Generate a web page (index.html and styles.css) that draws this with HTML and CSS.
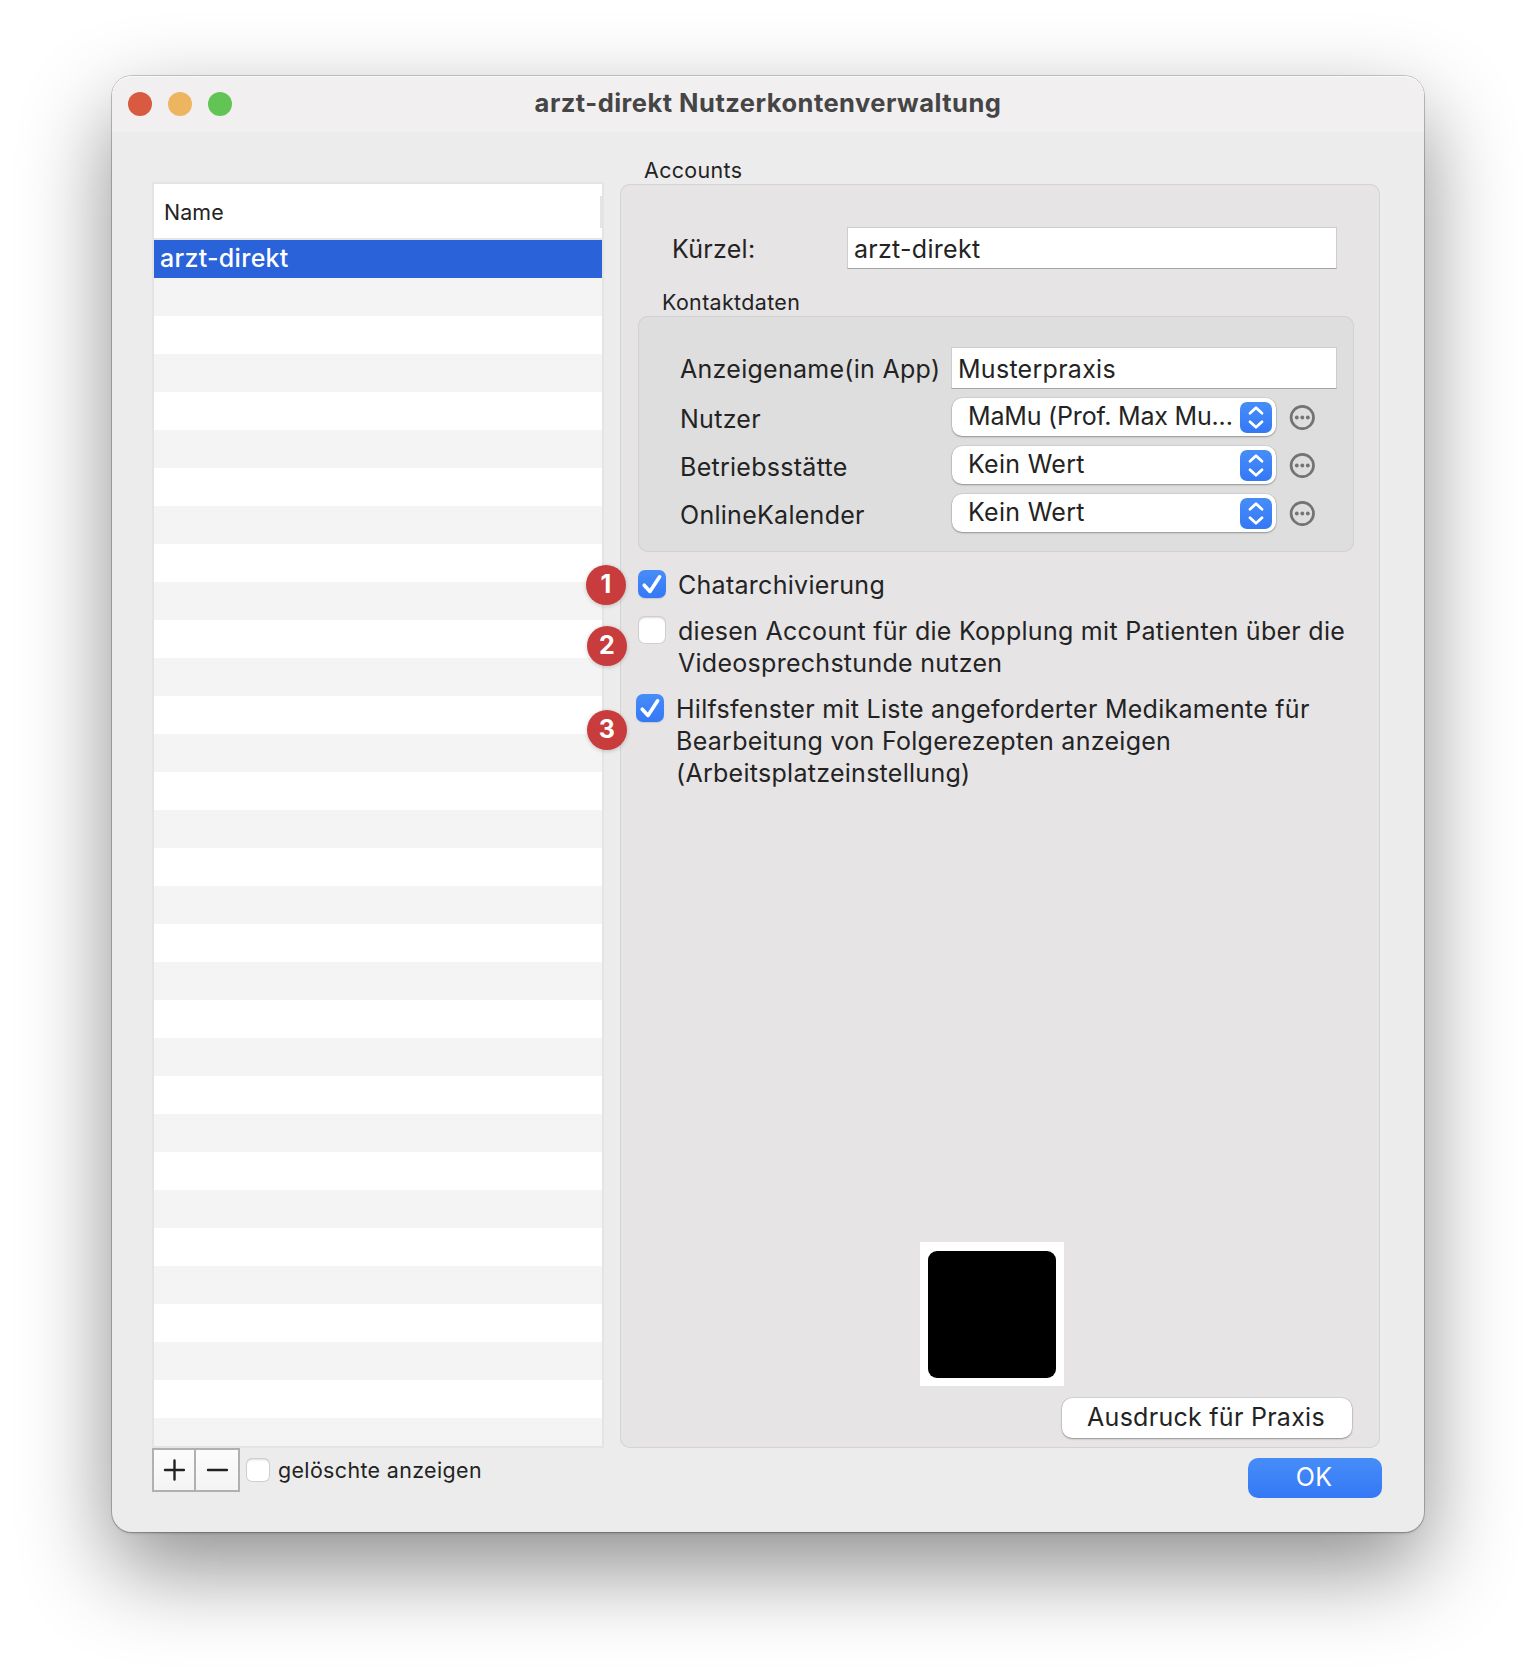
FILE: index.html
```html
<!DOCTYPE html>
<html lang="de">
<head>
<meta charset="utf-8">
<title>arzt-direkt Nutzerkontenverwaltung</title>
<link rel="stylesheet" href="styles.css">
</head>
<body>
<svg class="defs" aria-hidden="true">
  <symbol id="updown" viewBox="0 0 32 31"><path d="M10 11.2 16 5.8l6 5.4M10 19.8l6 5.4 6-5.4" fill="none" stroke="#fff" stroke-width="2.8" stroke-linecap="round" stroke-linejoin="round"/></symbol>
  <symbol id="more" viewBox="0 0 26 26"><circle cx="13.3" cy="13.5" r="11.2" fill="none" stroke="#737373" stroke-width="2.7"/><circle cx="7.8" cy="13.5" r="1.9" fill="#737373"/><circle cx="13.3" cy="13.5" r="1.9" fill="#737373"/><circle cx="18.8" cy="13.5" r="1.9" fill="#737373"/></symbol>
  <symbol id="check" viewBox="0 0 28 28"><path d="M6.2 15.2 12 21.4 21.6 6.8" fill="none" stroke="#fff" stroke-width="3.6" stroke-linecap="round" stroke-linejoin="round"/></symbol>
</svg>
<main class="window">
  <header class="titlebar">
    <div class="lights"><i class="light close"></i><i class="light minimize"></i><i class="light zoom"></i></div>
    <h1 class="title">arzt-direkt Nutzerkontenverwaltung</h1>
  </header>
  <div class="content">
    <section class="sidebar">
      <div class="list">
        <div class="list-head small">Name</div>
        <div class="list-row">arzt-direkt</div>
        <div class="list-rest"></div>
      </div>
      <div class="list-foot">
        <div class="segments">
          <button class="segment" aria-label="Hinzufügen"><svg width="22" height="22"><path d="M11.5 1.5v19M2 11h19" stroke="#222" stroke-width="2.4" stroke-linecap="round"/></svg></button>
          <button class="segment" aria-label="Entfernen"><svg width="22" height="22"><path d="M2 11h19" stroke="#222" stroke-width="2.4" stroke-linecap="round"/></svg></button>
        </div>
        <i class="checkbox compact"></i>
        <span class="small deleted">gelöschte anzeigen</span>
      </div>
    </section>
    <section class="main">
      <h2 class="panel-title small">Accounts</h2>
      <div class="panel">
        <div class="field short-field"><label>Kürzel:</label><div class="input">arzt-direkt</div></div>
        <h3 class="group-title small">Kontaktdaten</h3>
        <div class="group">
          <div class="field"><label>Anzeigename(in App)</label><div class="input">Musterpraxis</div></div>
          <div class="field select-field"><label>Nutzer</label><div class="select"><span class="truncated">MaMu (Prof. Max Mu...</span><svg class="arrows"><use href="#updown"/></svg></div><svg class="more"><use href="#more"/></svg></div>
          <div class="field select-field"><label>Betriebsstätte</label><div class="select"><span>Kein Wert</span><svg class="arrows"><use href="#updown"/></svg></div><svg class="more"><use href="#more"/></svg></div>
          <div class="field select-field"><label>OnlineKalender</label><div class="select"><span>Kein Wert</span><svg class="arrows"><use href="#updown"/></svg></div><svg class="more"><use href="#more"/></svg></div>
        </div>
        <div class="options">
          <div class="option chat"><b class="badge">1</b><i class="checkbox checked"><svg><use href="#check"/></svg></i><p>Chatarchivierung</p></div>
          <div class="option pairing"><b class="badge">2</b><i class="checkbox"></i><p>diesen Account für die Kopplung mit Patienten über die<br>Videosprechstunde nutzen</p></div>
          <div class="option helper"><b class="badge">3</b><i class="checkbox checked"><svg><use href="#check"/></svg></i><p>Hilfsfenster mit Liste angeforderter Medikamente für<br>Bearbeitung von Folgerezepten anzeigen<br>(Arbeitsplatzeinstellung)</p></div>
        </div>
        <div class="code"><i></i></div>
        <button class="button print">Ausdruck für Praxis</button>
      </div>
      <button class="button ok">OK</button>
    </section>
  </div>
</main>
</body>
</html>
```
FILE: styles.css
```css
* { box-sizing: border-box; }
body {
  margin: 0;
  width: 1536px;
  height: 1680px;
  padding: 76px 112px;
  background: #fff;
  color: #232323;
  font: 25px/32px Inter, "Liberation Sans", sans-serif;
  letter-spacing: .28px;
  overflow: hidden;
}
h1, h2, h3, p { margin: 0; font: inherit; }
.defs { position: absolute; width: 0; height: 0; }
.small { font-size: 21.4px; line-height: 28px; letter-spacing: .38px; }

.window {
  display: flex;
  flex-direction: column;
  width: 1312px;
  height: 1456px;
  border-radius: 20px;
  background: #ececec;
  box-shadow: 0 0 0 1px rgba(0, 0, 0, .2), 0 2px 2px rgba(0, 0, 0, .12), 0 36px 90px rgba(0, 0, 0, .45);
}
.titlebar {
  display: grid;
  grid-template-columns: 156px 1fr 156px;
  align-items: center;
  height: 56px;
  padding: 0 16px;
  border-radius: 20px 20px 0 0;
  background: #f1eff0;
  box-shadow: inset 0 1px #fbfafa;
}
.lights { display: flex; gap: 16px; }
.light { width: 24px; height: 24px; border-radius: 50%; }
.close { background: #d85a41; }
.minimize { background: #edb560; }
.zoom { background: #62c454; }
.title { padding-bottom: 2px; text-align: center; font-size: 25.5px; font-weight: 700; letter-spacing: .48px; color: #454545; white-space: nowrap; }

.content { display: flex; gap: 16px; padding-left: 40px; }
.sidebar { width: 452px; padding-top: 50px; }
.list { display: flex; flex-direction: column; height: 1266px; border: 2px solid #e4e4e4; background: #fff; }
.list-head {
  height: 56px;
  padding: 14px 0 0 10px;
  border-bottom: 2px solid #e4e4e4;
  background: linear-gradient(#e4e4e4, #e4e4e4) right 12px / 2px 32px no-repeat;
  letter-spacing: .1px;
}
.list-row { height: 38px; padding-left: 6px; background: #2a62da; color: #fff; font-weight: 500; line-height: 37px; }
.list-rest { flex: 1; background: repeating-linear-gradient(#f4f4f4 0 38px, #fff 38px 76px); }
.list-foot { display: flex; align-items: flex-start; }
.segments { display: flex; width: 88px; height: 44px; border: 2px solid #b0b0b0; background: linear-gradient(#fcfcfc, #f4f4f4); }
.segment { display: grid; place-items: center; flex: 1; padding: 0; border: 0; background: none; }
.segment:first-child { flex: 0 0 42px; border-right: 2px solid #b0b0b0; }
.deleted { margin: 8px 0 0 8px; }

.checkbox {
  flex: none;
  width: 28px;
  height: 28px;
  border-radius: 7px;
  background: #fff;
  box-shadow: inset 0 0 0 1px #cfcfcf, inset 0 2px 2px rgba(0, 0, 0, .14);
}
.checkbox svg { display: block; width: 28px; height: 28px; }
.checked { background: linear-gradient(#478df8, #3478f6); box-shadow: 0 1px 1px rgba(0, 0, 0, .12); }
.compact { width: 24px; height: 24px; margin: 10px 0 0 6px; border-radius: 6px; }

.main { display: flex; flex-direction: column; width: 762px; }
.panel-title { padding: 24px 0 0 24px; }
.panel {
  display: flex;
  flex-direction: column;
  width: 760px;
  height: 1264px;
  padding-bottom: 10px;
  border-radius: 10px;
  background: #e6e4e5;
  box-shadow: inset 0 0 0 1px #d5d4d5;
}
.field { display: flex; align-items: flex-start; height: 42px; line-height: 44px; white-space: nowrap; }
.field label { width: 271px; }
.short-field { margin: 43px 0 0 52px; }
.short-field label { width: 175px; }
.input { width: 386px; height: 42px; padding-left: 6px; border: 1px solid #cdcdcd; border-bottom-color: #a5a5a5; background: #fff; line-height: 42px; }
.short-field .input { width: 490px; }
.group-title { margin: 19px 0 0 42px; }
.group {
  width: 716px;
  height: 236px;
  margin-left: 18px;
  padding: 31px 0 0 42px;
  border-radius: 10px;
  background: #dedede;
  box-shadow: inset 0 0 0 1px #d2d2d2;
}
.select-field { height: 38px; margin-top: 10px; line-height: 42px; }
.group .field:first-child + .select-field { margin-top: 9px; }
.select-field label { width: 272px; }
.select {
  display: flex;
  justify-content: space-between;
  width: 324px;
  height: 38px;
  padding: 4px 4px 0 16px;
  border-radius: 10px;
  background: #fff;
  box-shadow: 0 0 0 .5px rgba(0, 0, 0, .12), 0 1px 2px rgba(0, 0, 0, .3);
  line-height: 29px;
}
.truncated { letter-spacing: -.18px; }
.arrows { width: 32px; height: 31px; border-radius: 7px; background: linear-gradient(#478df8, #3478f6); }
.more { width: 26px; height: 26px; margin: 6px 0 0 13px; overflow: visible; }

.options { display: flex; flex-direction: column; gap: 14px; margin: 17px 0 0 18px; }
.option { position: relative; display: flex; gap: 12px; white-space: nowrap; }
.option .checkbox { margin-top: 1px; }
.helper { margin-left: -2px; }
.badge {
  position: absolute;
  left: -52px;
  top: -4px;
  width: 40px;
  height: 40px;
  border-radius: 50%;
  background: #c93c3d;
  color: #fff;
  font-weight: 700;
  line-height: 39px;
  text-align: center;
  box-shadow: 0 1px 4px rgba(0, 0, 0, .2);
}
.pairing .badge { left: -51px; top: 11px; }
.helper .badge { left: -49px; top: 17px; }

.code { width: 144px; height: 144px; margin: auto 0 12px 300px; padding: 9px 8px 8px; background: #fff; }
.code i { display: block; height: 127px; border-radius: 9px; background: #000; }
.button { height: 40px; padding: 0 2px 2px 0; border: 0; border-radius: 10px; color: inherit; font: inherit; letter-spacing: inherit; line-height: 36px; white-space: nowrap; }
.print { width: 290px; margin-left: 442px; background: #fff; box-shadow: 0 0 0 .5px rgba(0, 0, 0, .15), 0 1px 2px rgba(0, 0, 0, .3); }
.ok { align-self: flex-end; width: 134px; margin-top: 10px; background: linear-gradient(#478df8, #3478f6); color: #fff; }
```
